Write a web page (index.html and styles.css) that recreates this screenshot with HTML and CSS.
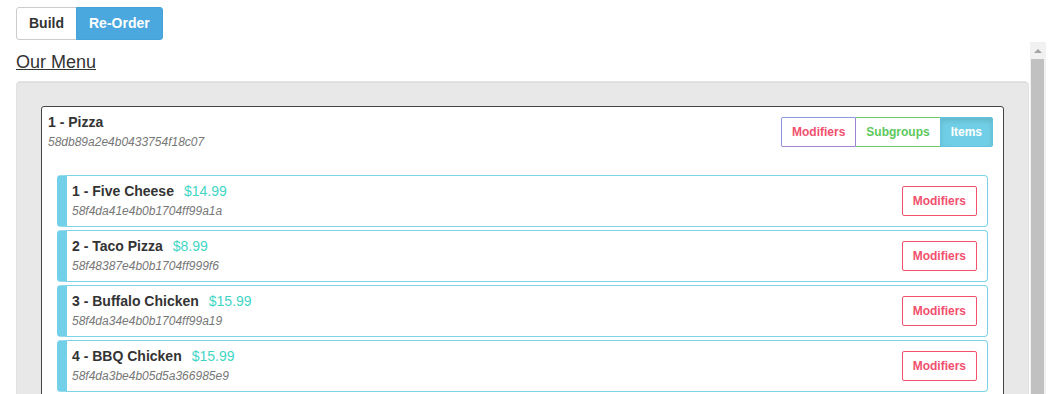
FILE: index.html
```html
<!DOCTYPE html>
<html>
<head>
<meta charset="utf-8">
<link rel="stylesheet" href="styles.css">
</head>
<body>
<div class="mode-group">
  <button class="mode-btn">Build</button><button class="mode-btn active">Re-Order</button>
</div>
<div class="scroll-area">
  <div class="scroll-content">
    <h2 class="menu-title">Our Menu</h2>
    <div class="well">
      <div class="panel">
        <div class="panel-head">
          <div>
            <div class="group-name">1 - Pizza</div>
            <div class="oid">58db89a2e4b0433754f18c07</div>
          </div>
          <div class="tabs">
            <button class="tab tab-mod">Modifiers</button><button class="tab tab-sub">Subgroups</button><button class="tab tab-items">Items</button>
          </div>
        </div>
        <div class="items">
          <div class="item">
            <div>
              <div class="item-name">1 - Five Cheese<span class="price">$14.99</span></div>
              <div class="oid">58f4da41e4b0b1704ff99a1a</div>
            </div>
            <button class="mod-btn">Modifiers</button>
          </div>
          <div class="item">
            <div>
              <div class="item-name">2 - Taco Pizza<span class="price">$8.99</span></div>
              <div class="oid">58f48387e4b0b1704ff999f6</div>
            </div>
            <button class="mod-btn">Modifiers</button>
          </div>
          <div class="item">
            <div>
              <div class="item-name">3 - Buffalo Chicken<span class="price">$15.99</span></div>
              <div class="oid">58f4da34e4b0b1704ff99a19</div>
            </div>
            <button class="mod-btn">Modifiers</button>
          </div>
          <div class="item">
            <div>
              <div class="item-name">4 - BBQ Chicken<span class="price">$15.99</span></div>
              <div class="oid">58f4da3be4b05d5a366985e9</div>
            </div>
            <button class="mod-btn">Modifiers</button>
          </div>
        </div>
      </div>
    </div>
  </div>
  <div class="scrollbar" aria-hidden="true">
    <div class="sb-arrow"><span class="sb-tri"></span></div>
    <div class="sb-thumb"></div>
  </div>
</div>
</body>
</html>
```

FILE: styles.css
```css
html, body {
  margin: 0;
  padding: 0;
  overflow: hidden;
  background: #fff;
  font-family: "Liberation Sans", Arial, sans-serif;
  color: #333;
}

.mode-group {
  display: flex;
  margin: 7px 0 0 16px;
}

.mode-btn {
  font-family: inherit;
  font-size: 14px;
  font-weight: bold;
  line-height: 19px;
  padding: 6px 12px;
  border: 1px solid #ccc;
  background: #fff;
  color: #333;
  margin: 0;
  border-radius: 3px 0 0 3px;
}

.mode-btn.active {
  background: #4aa8de;
  border-color: #44a2d8;
  color: #fff;
  border-radius: 0 3px 3px 0;
  margin-left: -1px;
}

.scroll-area {
  display: flex;
  margin: 2px 0 0 16px;
  width: 1030px;
  height: 352px;
}

.scroll-content {
  flex: 1;
  min-width: 0;
  overflow: hidden;
}

.scrollbar {
  width: 16px;
  flex: none;
  display: flex;
  flex-direction: column;
  background: #f1f1f1;
}

.sb-arrow {
  height: 15px;
  display: flex;
  justify-content: center;
  align-items: flex-start;
  padding-top: 7px;
  box-sizing: border-box;
}

.sb-tri {
  width: 0;
  height: 0;
  border-left: 4px solid transparent;
  border-right: 4px solid transparent;
  border-bottom: 4px solid #a3a3a3;
  margin-right: 1px;
}

.sb-thumb {
  flex: 1;
  margin: 2px 2px 0 1px;
  background: #c1c1c1;
}

.menu-title {
  margin: 10px 0 9px 0;
  font-size: 18px;
  font-weight: normal;
  line-height: 20px;
  text-decoration: underline;
  color: #333;
}

.well {
  background: #e8e8e8;
  border: 1px solid #e2e2e2;
  border-radius: 4px;
  padding: 24px;
  margin-right: 1px;
  box-shadow: inset 0 1px 1px rgba(0,0,0,0.04);
}

.panel {
  background: #fff;
  border: 1px solid #444;
  border-radius: 3px;
  padding-bottom: 20px;
}

.panel-head {
  display: flex;
  justify-content: space-between;
  align-items: flex-start;
  padding: 5px 10px 0 6px;
}

.group-name {
  font-size: 14px;
  font-weight: bold;
  line-height: 20px;
}

.oid {
  font-size: 12px;
  font-style: italic;
  line-height: 17px;
  color: #777;
  margin-top: 2px;
}

.tabs {
  display: flex;
  margin-top: 5px;
}

.tab {
  font-family: inherit;
  font-size: 12px;
  font-weight: bold;
  line-height: 18px;
  padding: 5px 10px;
  margin: 0;
  background: #fff;
  border: 1px solid #ccc;
}

.tab-mod {
  color: #f2506e;
  border-color: #8c9be2 #9a84d6 #a285d4 #8f93e0;
  border-radius: 2px 0 0 2px;
}

.tab-sub {
  color: #5cc85c;
  border-color: #6ccf6c;
  border-left: none;
}

.tab-items {
  color: #fff;
  background: #70cfe6;
  border-color: #62c4de;
  border-radius: 0 2px 2px 0;
  margin-left: -1px;
  box-shadow: inset 0 3px 5px rgba(0,0,0,0.12);
}

.items {
  display: flex;
  flex-direction: column;
  gap: 3px;
  padding: 0 15px;
  margin-top: 24px;
}

.item {
  display: flex;
  justify-content: space-between;
  align-items: center;
  border: 1px solid #7fd3e8;
  border-left: 10px solid #72d0e8;
  border-radius: 4px;
  padding: 5px 10px 6px 5px;
}

.item-name {
  font-size: 14px;
  font-weight: bold;
  line-height: 20px;
}

.price {
  font-weight: normal;
  color: #3fd6c6;
  margin-left: 10px;
}

.mod-btn {
  font-family: inherit;
  font-size: 12px;
  font-weight: bold;
  line-height: 18px;
  padding: 5px 10px;
  margin: 0;
  background: #fff;
  color: #f2506e;
  border: 1px solid #f2506e;
  border-radius: 2px;
}
```
